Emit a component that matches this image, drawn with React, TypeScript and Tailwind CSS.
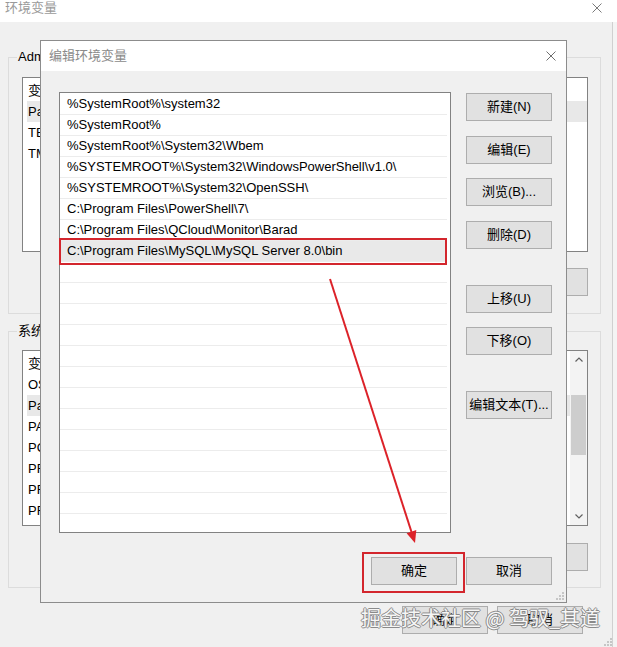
import React from "react";

const FONT = "font-[family-name:Liberation_Sans,Noto_Sans_CJK_SC,sans-serif]";

function XIcon({ color }: { color: string }) {
  return (
    <svg width="10" height="10" viewBox="0 0 10 10" className="block">
      <path d="M0.5 0.5 L9.5 9.5 M9.5 0.5 L0.5 9.5" stroke={color} strokeWidth="1" fill="none" />
    </svg>
  );
}

function Grip() {
  const pts = [
    [6, 0],
    [3, 3],
    [6, 3],
    [0, 6],
    [3, 6],
    [6, 6],
  ];
  return (
    <svg width="8" height="8" viewBox="0 0 8 8" className="block">
      {pts.map(([x, y], i) => (
        <rect key={i} x={x} y={y} width="2" height="2" fill="#c6c6c6" />
      ))}
    </svg>
  );
}

function Btn({ label, className = "" }: { label: string; className?: string }) {
  return (
    <div
      className={`h-[28px] w-[86px] shrink-0 border border-[#adadad] bg-[#e1e1e1] flex items-center justify-center text-[13px] text-black ${className}`}
    >
      {label}
    </div>
  );
}

function Chevron({ up }: { up: boolean }) {
  return (
    <svg width="8" height="5" viewBox="0 0 8 5" className="block">
      <path d={up ? "M0.5 4.5 L4 1 L7.5 4.5" : "M0.5 0.5 L4 4 L7.5 0.5"} stroke="#606060" strokeWidth="1.2" fill="none" />
    </svg>
  );
}

type VarRow = { name: string; value: string; sel?: boolean };

function VarRows({ rows }: { rows: VarRow[] }) {
  return (
    <div className="flex-1 flex flex-col pt-[2px]">
      {rows.map((r, i) => (
        <div
          key={i}
          className={`h-[21px] shrink-0 ml-[4px] pl-[1px] flex items-center text-[13px] text-black whitespace-nowrap ${
            r.sel ? "bg-[#e8e8e8]" : ""
          }`}
        >
          <span className="w-[270px] shrink-0">{r.name}</span>
          <span className="shrink-0">{r.value}</span>
        </div>
      ))}
    </div>
  );
}

const userVars: VarRow[] = [
  { name: "变量", value: "值" },
  { name: "Path", value: "%USERPROFILE%\\AppData", sel: true },
  { name: "TEMP", value: "%USERPROFILE%\\Temp" },
  { name: "TMP", value: "%USERPROFILE%\\Temp" },
];

const sysVars: VarRow[] = [
  { name: "变量", value: "值" },
  { name: "OS", value: "Windows_NT" },
  { name: "Path", value: "C:\\Windows\\system32", sel: true },
  { name: "PATHEXT", value: ".COM;.EXE;.BAT" },
  { name: "POWERSHELL_DISTRIBUTION_CHANNEL", value: "MSI:Windows 10" },
  { name: "PROCESSOR_ARCHITECTURE", value: "AMD64" },
  { name: "PROCESSOR_IDENTIFIER", value: "Intel64 Family 6" },
  { name: "PROCESSOR_LEVEL", value: "6" },
];

const paths = [
  "%SystemRoot%\\system32",
  "%SystemRoot%",
  "%SystemRoot%\\System32\\Wbem",
  "%SYSTEMROOT%\\System32\\WindowsPowerShell\\v1.0\\",
  "%SYSTEMROOT%\\System32\\OpenSSH\\",
  "C:\\Program Files\\PowerShell\\7\\",
  "C:\\Program Files\\QCloud\\Monitor\\Barad",
  "C:\\Program Files\\MySQL\\MySQL Server 8.0\\bin",
];

export default function App() {
  const rows = [...paths, ...Array(12).fill("")];
  return (
    <div className={`relative w-[617px] h-[647px] overflow-hidden bg-[#f0f0f0] ${FONT}`}>
      {/* background window title bar */}
      <div className="h-[22px] bg-white flex items-start justify-between pl-[5px] pr-[15px]">
        <span className="text-[13px] leading-[16px] text-[#9a9a9a]">环境变量</span>
        <div className="pt-[3px]">
          <XIcon color="#7a7a7a" />
        </div>
      </div>

      <div className="flex">
        <div className="w-[613px] h-[625px] shrink-0 border-r border-[#d0d0d0] pl-[8px] pr-[11px] flex flex-col">
          {/* user variables group */}
          <div className="relative mt-[35px] h-[257px] border border-[#dcdcdc] pl-[13px] pr-[12px] pt-[19px] flex flex-col">
            <span className="absolute -top-[9px] left-[8px] bg-[#f0f0f0] px-[1px] text-[13px] leading-[16px] text-black whitespace-nowrap">
              Administrator 的用户变量(U)
            </span>
            <div className="h-[175px] w-full border border-[#828282] bg-white flex overflow-hidden">
              <VarRows rows={userVars} />
            </div>
            <div className="mt-[16px] flex justify-end gap-[9px]">
              <Btn label="新建(N)..." />
              <Btn label="编辑(E)..." />
              <Btn label="删除(D)" />
            </div>
          </div>

          {/* system variables group */}
          <div className="relative mt-[17px] h-[257px] border border-[#dcdcdc] pl-[13px] pr-[12px] pt-[18px] flex flex-col">
            <span className="absolute -top-[9px] left-[8px] bg-[#f0f0f0] px-[1px] text-[13px] leading-[16px] text-black whitespace-nowrap">
              系统变量(S)
            </span>
            <div className="h-[176px] w-full border border-[#828282] bg-white flex overflow-hidden">
              <VarRows rows={sysVars} />
              <div className="w-[17px] shrink-0 bg-[#f3f3f3] flex flex-col items-center">
                <div className="h-[17px] w-full flex items-center justify-center">
                  <Chevron up />
                </div>
                <div className="mt-[27px] h-[60px] w-[15px] bg-[#cdcdcd]" />
                <div className="flex-1" />
                <div className="h-[17px] w-full flex items-center justify-center">
                  <Chevron up={false} />
                </div>
              </div>
            </div>
            <div className="mt-[17px] flex justify-end gap-[9px]">
              <Btn label="新建(W)..." />
              <Btn label="编辑(I)..." />
              <Btn label="删除(L)" />
            </div>
          </div>

          {/* background footer */}
          <div className="mt-[18px] flex justify-end gap-[9px] pr-[18px]">
            <Btn label="确定" />
            <Btn label="取消" />
          </div>
        </div>
        <div className="flex-1 bg-[#f4f4f4]" />
      </div>

      <div className="absolute left-[604px] top-[638px]">
        <Grip />
      </div>

      {/* edit dialog */}
      <div className="absolute left-[40px] top-[40px] w-[527px] h-[563px] border border-[#8c8c8c] bg-[#f0f0f0] flex flex-col">
        <div className="h-[30px] shrink-0 bg-white flex items-center justify-between pl-[8px] pr-[10px]">
          <span className="text-[13px] text-[#8a8a8a]">编辑环境变量</span>
          <XIcon color="#6e6e6e" />
        </div>
        <div className="flex-1 flex flex-col pt-[21px] pl-[18px] pr-[14px]">
          <div className="flex gap-[15px]">
            <div className="w-[392px] h-[441px] shrink-0 border border-[#828282] bg-white flex flex-col pt-[1px]">
              {rows.map((p, i) => {
                const sel = i === 7;
                return (
                  <div
                    key={i}
                    className={`relative h-[21px] shrink-0 mr-[3px] border-b border-[#ececec] pl-[7px] flex items-center text-[13px] text-black whitespace-nowrap ${
                      sel ? "bg-[#e9e9e9]" : ""
                    }`}
                  >
                    <span>{p}</span>
                    {sel && (
                      <div className="absolute -left-[1px] -top-[3px] -bottom-[4px] right-0 border-2 border-[#d3262d]" />
                    )}
                  </div>
                );
              })}
            </div>
            <div className="w-[86px] shrink-0 flex flex-col">
              <Btn label="新建(N)" className="mt-[1px]" />
              <Btn label="编辑(E)" className="mt-[15px]" />
              <Btn label="浏览(B)..." className="mt-[14px]" />
              <Btn label="删除(D)" className="mt-[15px]" />
              <Btn label="上移(U)" className="mt-[36px]" />
              <Btn label="下移(O)" className="mt-[14px]" />
              <Btn label="编辑文本(T)..." className="mt-[36px]" />
            </div>
          </div>
          <div className="mt-[24px] flex justify-end gap-[9px]">
            <div className="relative">
              <Btn label="确定" />
              <div className="absolute -left-[9px] -right-[8px] -top-[5px] -bottom-[8px] border-2 border-[#d3262d]" />
            </div>
            <Btn label="取消" />
          </div>
        </div>
        <div className="absolute right-[2px] bottom-[2px]">
          <Grip />
        </div>
      </div>

      {/* annotation arrow */}
      <svg className="absolute left-0 top-0 pointer-events-none" width="617" height="647" viewBox="0 0 617 647">
        <line x1="330" y1="279" x2="411.5" y2="532" stroke="#dc2229" strokeWidth="2" />
        <polygon points="415,543 416.3,530 406.6,533.2" fill="#dc2229" />
      </svg>

      {/* watermark */}
      <div className="absolute left-[361px] top-[607px] text-[20px] leading-[22px] whitespace-nowrap text-[#f6f6f6] font-[family-name:Noto_Sans_CJK_SC,sans-serif] [text-shadow:1px_0_#8a8a8a,-1px_0_#8a8a8a,0_1px_#8a8a8a,0_-1px_#8a8a8a]">
        掘金技术社区 @ 驾驭_其道
      </div>
    </div>
  );
}
